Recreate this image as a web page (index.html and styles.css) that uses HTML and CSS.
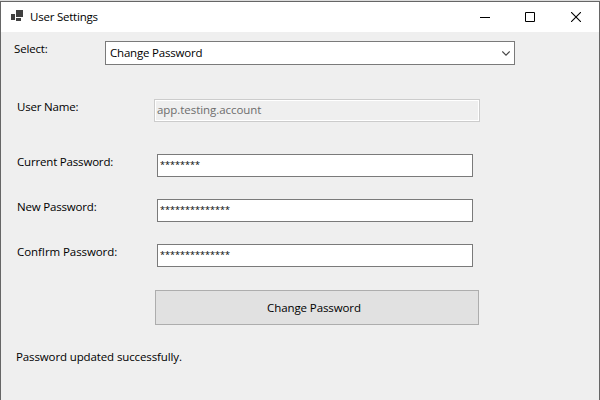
FILE: index.html
```html
<!DOCTYPE html>
<html lang="en">
<head>
<meta charset="utf-8">
<title>User Settings</title>
<link rel="stylesheet" href="styles.css">
</head>
<body>
<div class="window">
  <header class="titlebar">
    <svg class="app-icon" width="12" height="11" viewBox="0 0 12 11" shape-rendering="crispEdges"><path fill="#404040" d="M5 0h7v7H5zM0 4h4v6H0zM5 8h5v3H5z"/></svg>
    <h1 class="title">User Settings</h1>
    <div class="controls">
      <svg width="10" height="10" viewBox="0 0 10 10"><path d="M0 5.5h10" stroke="#000"/></svg>
      <svg width="10" height="10" viewBox="0 0 10 10"><path d="M.5.5h9v9h-9z" fill="none" stroke="#000"/></svg>
      <svg class="close" width="10" height="10" viewBox="0 0 10 10"><path d="M0 0l10 10M10 0L0 10" stroke="#000" stroke-width="1.1"/></svg>
    </div>
  </header>
  <main class="content">
    <div class="row row-select">
      <span class="label select-label">Select:</span>
      <div class="combo"><span class="combo-text">Change Password</span>
        <svg width="8" height="5" viewBox="0 0 8 5"><path d="M.3.5L4 4.2 7.7.5" fill="none" stroke="#444" stroke-width="1.1"/></svg>
      </div>
    </div>
    <div class="row row-user">
      <span class="label user-label">User Name:</span>
      <div class="field disabled">app.testing.account</div>
    </div>
    <div class="row row-password">
      <span class="label current-label">Current Password:</span>
      <div class="field secret">********</div>
    </div>
    <div class="row row-password">
      <span class="label new-label">New Password:</span>
      <div class="field secret">**************</div>
    </div>
    <div class="row row-password">
      <span class="label confirm-label">ConfIrm Password:</span>
      <div class="field secret">**************</div>
    </div>
    <button class="submit" type="button">Change Password</button>
    <p class="status">Password updated successfully.</p>
  </main>
</div>
</body>
</html>
```
FILE: styles.css
```css
* { box-sizing: border-box; }
body {
  margin: 0;
  padding-top: 1px;
  height: 400px;
  overflow: hidden;
  background: #dcdcdc;
  color: #000;
  font: 11.5px/16px "Open Sans", "Noto Sans", sans-serif;
  white-space: nowrap;
}
.window {
  height: 399px;
  border: 1px solid #666;
  border-bottom: 0;
  background: #efefef;
}
.titlebar {
  display: flex;
  align-items: center;
  height: 30px;
  padding: 0 18px 0 10px;
  background: #fff;
}
.app-icon { margin: -3px 7px 0 0; }
.title {
  margin: 0;
  font-size: 11.5px;
  font-weight: 400;
  letter-spacing: -0.22px;
}
.controls {
  display: flex;
  gap: 35px;
  margin-left: auto;
}
.controls svg { display: block; margin-top: -1px; }
.controls .close { margin-left: 1px; }
.content { padding: 9px 0 0 13px; }
.row { display: flex; }
.label { letter-spacing: -0.18px; }
.select-label { width: 91px; }
.combo {
  display: flex;
  align-items: center;
  justify-content: space-between;
  width: 410px;
  height: 24px;
  padding: 0 4px;
  border: 1px solid #7a7a7a;
  background: #fff;
}
.combo-text { letter-spacing: -0.2px; }
.row-user {
  margin: 34px 0 32px 3px;
}
.user-label { width: 137px; }
.field {
  height: 23px;
  padding: 2px;
  border: 1px solid #7a7a7a;
  background: #fff;
}
.disabled {
  width: 326px;
  border-color: #ccc;
  background: #efefef;
  box-shadow: inset 0 0 0 1px #fff;
  color: #6d6d6d;
  letter-spacing: -0.05px;
}
.row-password {
  height: 23px;
  margin: 0 0 22px 3px;
}
.row-password .label { width: 140px; }
.row-password .confirm-label { letter-spacing: -0.08px; }
.secret { width: 316px; font-size: 9px; letter-spacing: 0.04px; }
.submit {
  display: block;
  width: 324px;
  height: 35px;
  margin: 23px 0 0 141px;
  padding: 1px 6px 0 0;
  border: 1px solid #adadad;
  background: #e1e1e1;
  color: #000;
  font: inherit;
  letter-spacing: -0.1px;
}
.status {
  margin: 24px 0 0 2px;
  letter-spacing: -0.12px;
}
```
